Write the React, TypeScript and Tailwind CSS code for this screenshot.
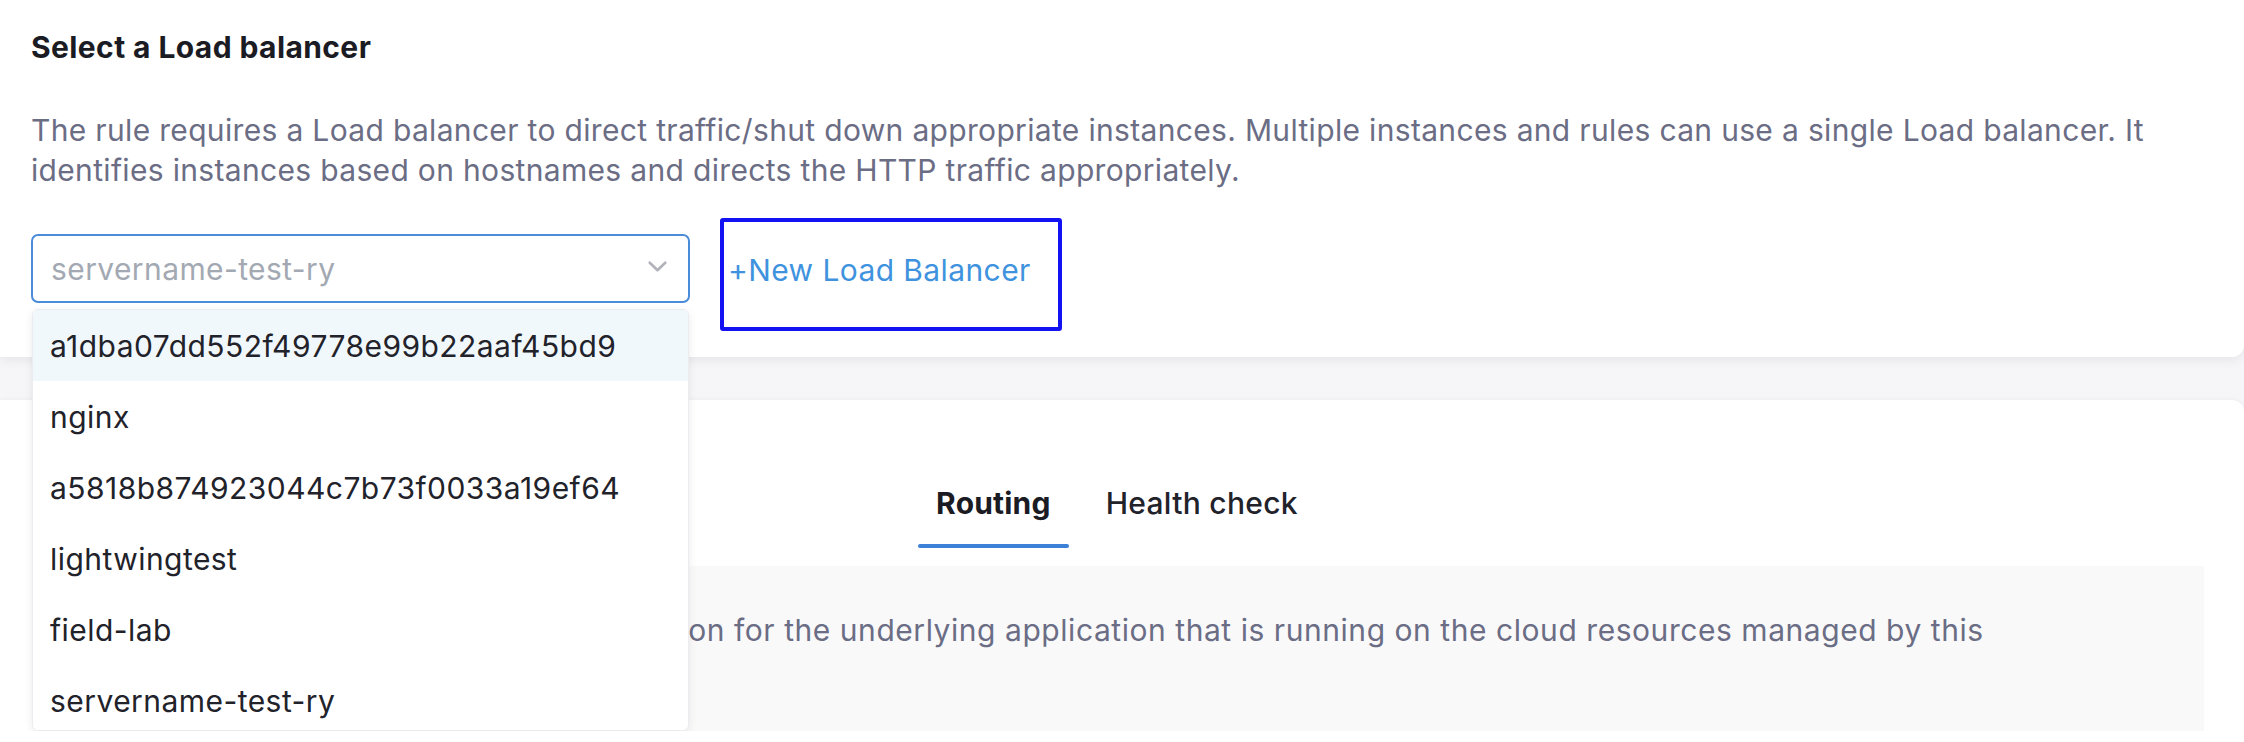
const options = [
  "a1dba07dd552f49778e99b22aaf45bd9",
  "nginx",
  "a5818b874923044c7b73f0033a19ef64",
  "lightwingtest",
  "field-lab",
  "servername-test-ry",
]

function Chevron() {
  return (
    <svg width="19" height="11" viewBox="0 0 19 11" fill="none" className="mt-[-4px]">
      <polyline
        points="1.75,1.75 9.5,9.25 17.25,1.75"
        stroke="#b2b2ba"
        strokeWidth="2.6"
        strokeLinecap="round"
        strokeLinejoin="round"
      />
    </svg>
  )
}

function LoadBalancerSelect() {
  return (
    <div className="relative mt-[16px]">
      <div className="flex h-[69px] w-[659px] items-center justify-between rounded-[7px] border-2 border-[#4b8cda] bg-white pl-[18px] pr-[21px]">
        <span className="text-[30px] leading-[34px] tracking-[0.4px] text-[#a3a9b3]">servername-test-ry</span>
        <Chevron />
      </div>

      {/* Options menu */}
      <div className="absolute left-[1px] top-full z-10 mt-[6px] h-[422px] w-[657px] overflow-hidden rounded-[6px] border border-[#ececf0] bg-white shadow-[0_2px_8px_rgba(0,0,0,0.08)]">
        {options.map((opt, i) => (
          <div
            key={opt}
            className={`flex h-[71px] items-center pl-[17px] text-[30px] leading-[34px] tracking-[0.45px] text-[#22222a] ${
              i === 0 ? "bg-[#f1f8fb]" : ""
            }`}
          >
            {opt}
          </div>
        ))}
      </div>
    </div>
  )
}

export default function App() {
  return (
    <div className="h-[742px] w-full bg-white font-['Inter',sans-serif]">
      <div className="flex h-[731px] flex-col overflow-hidden bg-[#f6f6f8]">
        {/* Load balancer card */}
        <section className="relative z-10 h-[357px] shrink-0 rounded-br-[12px] bg-white px-[31px] pt-[30px] shadow-[0_3px_12px_rgba(0,0,0,0.07)]">
          <h2 className="text-[30px] font-bold leading-[34px] tracking-[0.4px] text-[#1b1b24]">
            Select a Load balancer
          </h2>
          <p className="mt-[46px] text-[30px] leading-[40px] tracking-[0.33px] text-[#6b6d85]">
            The rule requires a Load balancer to direct traffic/shut down appropriate instances. Multiple instances and
            rules can use a single Load balancer. It identifies instances based on hostnames and directs the HTTP
            traffic appropriately.
          </p>
          <div className="mt-[28px] flex items-start">
            <LoadBalancerSelect />
            <div className="ml-[30px] h-[113px] w-[342px] rounded-[3px] border-[4px] border-[#1212f2] pl-[4px] pt-[31px]">
              <span className="block cursor-pointer text-[30px] leading-[34px] tracking-[0.4px] text-[#3f93de]">
                +New Load Balancer
              </span>
            </div>
          </div>
        </section>

        {/* Routing / health check card */}
        <section className="mt-[43px] flex-1 rounded-tr-[12px] bg-white pt-[86px] shadow-[0_-1px_4px_rgba(0,0,0,0.04)]">
          <div className="mr-[10px] flex justify-center gap-[19px]">
            <div className="flex flex-col items-center">
              <span className="px-[18px] text-[30px] font-bold leading-[34px] tracking-[0.2px] text-[#1b1b24]">
                Routing
              </span>
              <div className="mt-[24px] h-[4px] w-full rounded-full bg-[#3c80d8]" />
            </div>
            <div className="flex flex-col items-center">
              <span className="px-[18px] text-[30px] font-medium leading-[34px] tracking-[0.3px] text-[#22222a]">
                Health check
              </span>
            </div>
          </div>
          <div className="ml-[39px] mr-[40px] mt-[18px] h-[165px] bg-[#f9f9fa] pl-[202px] pt-[44px]">
            <p className="max-w-[1781px] text-[30px] leading-[40px] tracking-[0.55px] text-[#6b6d85]">
              Specify the routing configuration for the underlying application that is running on the cloud resources
              managed by this rule.
            </p>
          </div>
        </section>
      </div>
    </div>
  )
}
